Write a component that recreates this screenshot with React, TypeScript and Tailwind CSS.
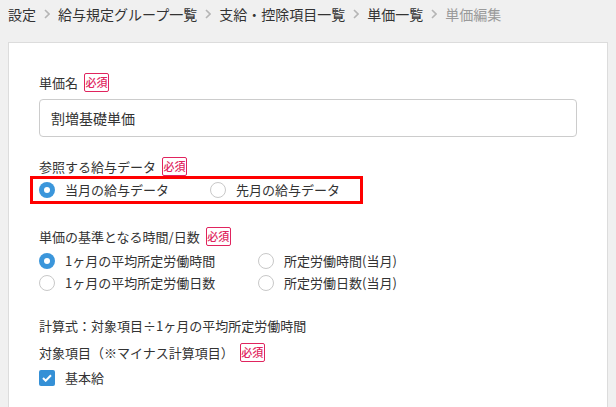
import React from 'react';

const Chevron = () => (
  <svg width="6" height="10" viewBox="0 0 6 10" className="mx-[8px] shrink-0">
    <path d="M1 1l4 4-4 4" fill="none" stroke="#b5b5b5" strokeWidth="1.6" />
  </svg>
);

const Required = () => (
  <span className="ml-[6px] inline-flex h-[19px] w-[25px] items-center justify-center rounded-[2px] border border-[#e0245e] text-[11px] font-medium leading-none text-[#e0245e]">
    必須
  </span>
);

function Label({ text }: { text: string }) {
  return (
    <div className="flex h-[19px] items-center text-[13px] text-[#333]">
      <span>{text}</span>
      <Required />
    </div>
  );
}

function Radio({ checked, label, width }: { checked?: boolean; label: string; width?: string }) {
  return (
    <div className={`flex items-center ${width ?? ''}`}>
      {checked ? (
        <span className="flex h-4 w-4 items-center justify-center rounded-full bg-[#3b96db]">
          <span className="h-[6px] w-[6px] rounded-full bg-white" />
        </span>
      ) : (
        <span className="h-4 w-4 rounded-full border border-[#c8c8c8] bg-white" />
      )}
      <span className="ml-[10px] text-[13px] text-[#333]">{label}</span>
    </div>
  );
}

export default function App() {
  return (
    <div
      className="h-screen overflow-hidden bg-[#f0f0f0]"
      style={{ fontFamily: '"Noto Sans CJK JP", "Noto Sans", sans-serif' }}
    >
      {/* Breadcrumb */}
      <div className="flex h-[42px] items-start px-2 pt-1 text-[14px] leading-[20px] text-[#333]">
        <div className="flex items-center">
          <span>設定</span>
          <Chevron />
          <span>給与規定グループ一覧</span>
          <Chevron />
          <span>支給・控除項目一覧</span>
          <Chevron />
          <span>単価一覧</span>
          <Chevron />
          <span className="text-[#9a9a9a]">単価編集</span>
        </div>
      </div>

      {/* Card */}
      <div className="mx-2 w-[600px] border border-[#dcdcdc] bg-white px-[30px] pb-10 pt-[30px]">
        <Label text="単価名" />
        <div className="mt-[7px] flex h-[38px] w-[538px] items-center rounded-[4px] border border-[#cccccc] px-[11px] text-[14px] text-[#333]">
          割増基礎単価
        </div>

        <div className="mt-[20px]">
          <Label text="参照する給与データ" />
        </div>
        <div className="-ml-[9px] flex h-[28px] w-[333px] items-center border-[3px] border-[#ff0000] pl-[6px]">
          <Radio checked label="当月の給与データ" width="w-[171px]" />
          <Radio label="先月の給与データ" />
        </div>

        <div className="mt-[23px]">
          <Label text="単価の基準となる時間/日数" />
        </div>
        <div className="mt-[4px]">
          <div className="flex h-[22px] items-center">
            <Radio checked label="1ヶ月の平均所定労働時間" width="w-[219px]" />
            <Radio label="所定労働時間(当月)" />
          </div>
          <div className="flex h-[22px] items-center">
            <Radio label="1ヶ月の平均所定労働日数" width="w-[219px]" />
            <Radio label="所定労働日数(当月)" />
          </div>
        </div>

        <div className="mt-[22px] flex h-[20px] items-center text-[13px] text-[#333]">
          計算式：対象項目÷1ヶ月の平均所定労働時間
        </div>

        <div className="mt-[7px]">
          <Label text="対象項目（※マイナス計算項目）" />
        </div>
        <div className="mt-[5px] flex h-[22px] items-center">
          <span className="flex h-4 w-4 items-center justify-center rounded-[2px] bg-[#3590d6]">
            <svg width="10" height="8" viewBox="0 0 10 8">
              <path d="M1 4l2.7 2.7L9 1.3" fill="none" stroke="#fff" strokeWidth="2" />
            </svg>
          </span>
          <span className="ml-[10px] text-[13px] text-[#333]">基本給</span>
        </div>
      </div>
    </div>
  );
}
